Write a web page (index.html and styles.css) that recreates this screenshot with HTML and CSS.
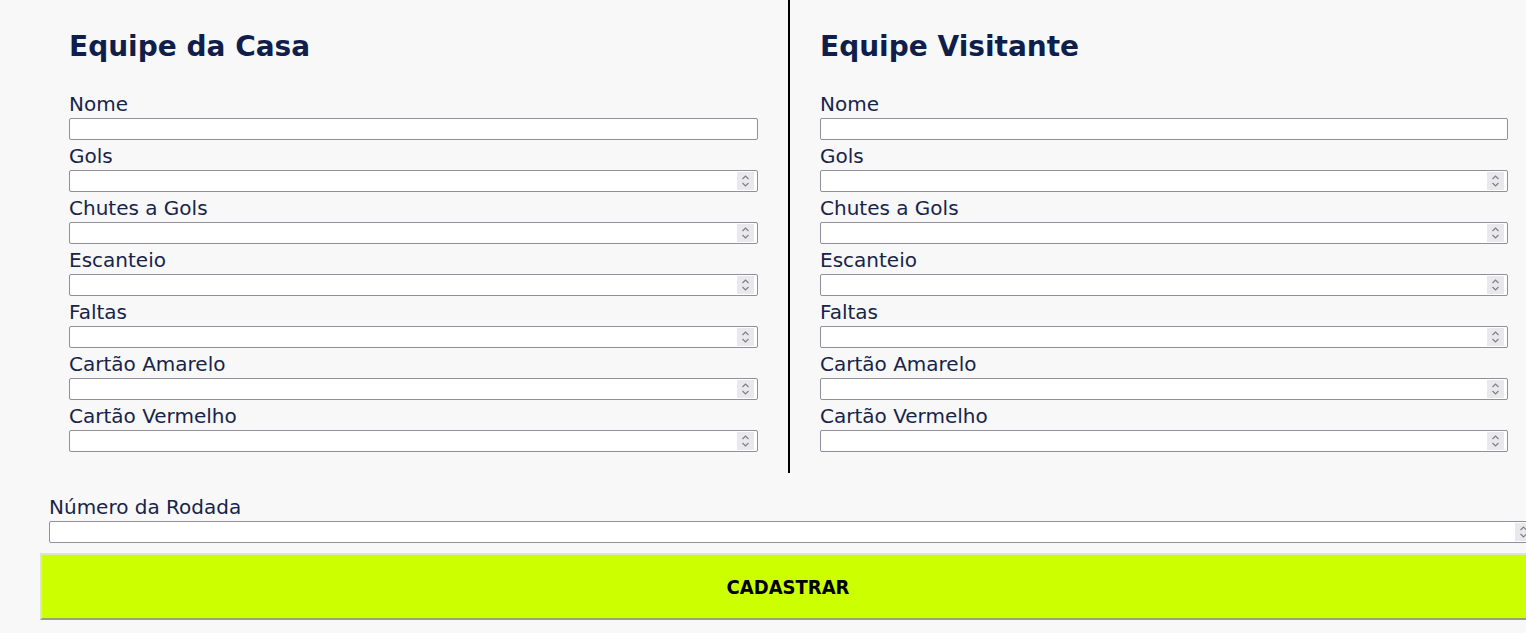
FILE: index.html
```html
<!DOCTYPE html>
<html lang="pt-BR">
<head>
<meta charset="utf-8">
<title>Cadastro de Partida</title>
<link rel="stylesheet" href="styles.css">
</head>
<body>
<form class="page">
  <div class="teams">
    <section class="team team-home">
      <h2 class="team-title">Equipe da Casa</h2>
      <label class="field"><span class="field-label">Nome</span><span class="box"><input class="input" type="text"></span></label>
      <label class="field"><span class="field-label">Gols</span><span class="box spin"><input class="input" type="number"></span></label>
      <label class="field"><span class="field-label">Chutes a Gols</span><span class="box spin"><input class="input" type="number"></span></label>
      <label class="field"><span class="field-label">Escanteio</span><span class="box spin"><input class="input" type="number"></span></label>
      <label class="field"><span class="field-label">Faltas</span><span class="box spin"><input class="input" type="number"></span></label>
      <label class="field"><span class="field-label">Cartão Amarelo</span><span class="box spin"><input class="input" type="number"></span></label>
      <label class="field"><span class="field-label">Cartão Vermelho</span><span class="box spin"><input class="input" type="number"></span></label>
    </section>
    <section class="team team-away">
      <h2 class="team-title">Equipe Visitante</h2>
      <label class="field"><span class="field-label">Nome</span><span class="box"><input class="input" type="text"></span></label>
      <label class="field"><span class="field-label">Gols</span><span class="box spin"><input class="input" type="number"></span></label>
      <label class="field"><span class="field-label">Chutes a Gols</span><span class="box spin"><input class="input" type="number"></span></label>
      <label class="field"><span class="field-label">Escanteio</span><span class="box spin"><input class="input" type="number"></span></label>
      <label class="field"><span class="field-label">Faltas</span><span class="box spin"><input class="input" type="number"></span></label>
      <label class="field"><span class="field-label">Cartão Amarelo</span><span class="box spin"><input class="input" type="number"></span></label>
      <label class="field"><span class="field-label">Cartão Vermelho</span><span class="box spin"><input class="input" type="number"></span></label>
    </section>
  </div>
  <label class="field round"><span class="field-label">Número da Rodada</span><span class="box spin"><input class="input" type="number"></span></label>
  <button class="submit" type="submit">CADASTRAR</button>
</form>
</body>
</html>
```
FILE: styles.css
```css
html, body {
  margin: 0;
  padding: 0;
  overflow: hidden;
  background: #f8f8f8;
}
body {
  font-family: "DejaVu Sans", "Liberation Sans", sans-serif;
  color: #14213d;
}
.page {
  width: 1498px;
  padding-left: 40px;
  display: flex;
  flex-direction: column;
}
.teams {
  display: flex;
}
.team {
  display: flex;
  flex-direction: column;
  padding-bottom: 15px;
}
.team-home {
  width: 689px;
  padding-left: 29px;
  padding-right: 30px;
  border-right: 2px solid #000;
}
.team-away {
  width: 688px;
  padding-left: 30px;
  padding-right: 30px;
}
.team-title {
  margin: 29px 0 29px;
  font-size: 28px;
  font-weight: 700;
  line-height: 36px;
  color: #0f1e4a;
}
.field {
  display: flex;
  flex-direction: column;
  margin-bottom: 6px;
}
.field-label {
  font-size: 20px;
  line-height: 20px;
  padding-bottom: 4px;
  color: #172449;
}
.box {
  position: relative;
  display: block;
  height: 22px;
}
.input {
  display: block;
  box-sizing: border-box;
  width: 100%;
  height: 22px;
  margin: 0;
  padding: 0 4px;
  border: 1px solid #8f8f9d;
  border-radius: 2px;
  background: #fff;
  font-size: 14px;
  -moz-appearance: textfield;
  appearance: textfield;
}
.input::-webkit-inner-spin-button,
.input::-webkit-outer-spin-button {
  -webkit-appearance: none;
  margin: 0;
}
.spin::after {
  content: "";
  position: absolute;
  right: 4px;
  top: 2px;
  width: 17px;
  height: 18px;
  background-color: #e9e9ed;
  background-image: url("data:image/svg+xml,%3Csvg xmlns='http://www.w3.org/2000/svg' width='17' height='18' viewBox='0 0 17 18'%3E%3Cpath d='M5.5 7 L8.5 4 L11.5 7 M5.5 11 L8.5 14 L11.5 11' fill='none' stroke='%23808080' stroke-width='1.2'/%3E%3C/svg%3E");
  background-repeat: no-repeat;
  pointer-events: none;
}
.round {
  margin: 24px 0 10px 9px;
  width: 1487px;
}
.submit {
  width: 1496px;
  height: 67px;
  margin: 0;
  background: #ccff00;
  border: 2px solid #dde8b5;
  border-bottom-color: #9ba36c;
  border-right-color: #9ba36c;
  font-family: "DejaVu Sans Condensed", "DejaVu Sans", sans-serif;
  font-weight: 700;
  font-size: 20px;
  color: #000;
  cursor: pointer;
}
```
